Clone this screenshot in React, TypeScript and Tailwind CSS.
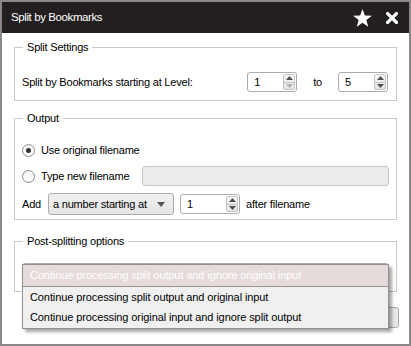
import React from "react";

const font = { fontFamily: '"Liberation Sans", Arial, sans-serif' };

function Spin({ value, w, downDisabled }: { value: string; w: string; downDisabled?: boolean }) {
  return (
    <div className={`relative flex h-[20px] ${w} items-center rounded-[3px] border border-[#acacac] bg-white`}>
      <span className="pl-[6px] text-[11px] leading-none text-black">{value}</span>
      <div className="absolute right-[1px] top-[1px] flex h-[16px] w-[12px] flex-col rounded-[2px] border border-[#c4c4c4] bg-gradient-to-b from-[#f6f6f6] to-[#e4e4e4]">
        <div className="flex flex-1 items-center justify-center border-b border-[#c4c4c4]">
          <svg width="7" height="4" viewBox="0 0 7 4"><path d="M0 4 L3.5 0 L7 4 Z" fill="#4d4d4d" /></svg>
        </div>
        <div className="flex flex-1 items-center justify-center">
          <svg width="7" height="4" viewBox="0 0 7 4"><path d="M0 0 L3.5 4 L7 0 Z" fill={downDisabled ? "#b4b4b4" : "#4d4d4d"} /></svg>
        </div>
      </div>
    </div>
  );
}

function Radio({ checked }: { checked?: boolean }) {
  return (
    <div className="flex h-[13px] w-[13px] items-center justify-center rounded-full border border-[#8c8c8c] bg-gradient-to-b from-[#f4f4f4] to-white">
      {checked && <div className="h-[5px] w-[5px] rounded-full bg-[#333333]" />}
    </div>
  );
}

export default function App() {
  return (
    <div className="h-[346px] w-[411px] overflow-hidden bg-[#8c8686] p-[2px] text-[11px] tracking-[-0.2px] text-black" style={font}>
      <div className="relative flex h-full w-full flex-col bg-white">
        {/* Title bar */}
        <div className="flex h-[31px] shrink-0 items-center bg-[#231f20] pl-[9px] pr-[11px]">
          <span className="flex-1 text-[11.5px] tracking-[-0.4px] text-white">Split by Bookmarks</span>
          <svg width="19" height="18" viewBox="0 0 24 23" className="mr-[14px]">
            <path d="M12 0 L15 8.2 L24 8.6 L16.9 14 L19.4 22.6 L12 17.6 L4.6 22.6 L7.1 14 L0 8.6 L9 8.2 Z" fill="#ffffff" />
          </svg>
          <svg width="12" height="12" viewBox="0 0 12 12">
            <path d="M1.5 1.5 L10.5 10.5 M10.5 1.5 L1.5 10.5" stroke="#ffffff" strokeWidth="3.2" strokeLinecap="square" />
          </svg>
        </div>

        <div className="flex flex-col px-[12px] pt-[8px]">
          {/* Split Settings */}
          <fieldset className="border border-[#c9c9c9] pb-[8px] pl-[7px] pr-[8px]">
            <legend className="ml-[1px] px-[4px] leading-[13px]">Split Settings</legend>
            <div className="mt-[18px] flex items-center">
              <span className="flex-1">Split by Bookmarks starting at Level:</span>
              <Spin value="1" w="w-[50px]" downDisabled />
              <span className="mx-[16px]">to</span>
              <Spin value="5" w="w-[50px]" />
            </div>
          </fieldset>

          {/* Output */}
          <fieldset className="mt-[11px] border border-[#c9c9c9] pb-[4px] pl-[7px] pr-[7px]">
            <legend className="ml-[1px] px-[4px] leading-[13px]">Output</legend>
            <div className="mt-[15px] flex h-[20px] items-center">
              <Radio checked />
              <span className="ml-[6px]">Use original filename</span>
            </div>
            <div className="mt-[6px] flex h-[20px] items-center">
              <Radio />
              <span className="ml-[6px] w-[101px]">Type new filename</span>
              <div className="h-[20px] flex-1 rounded-[3px] border border-[#c8c8c8] bg-[#ececec]" />
            </div>
            <div className="mt-[7px] flex h-[22px] items-center">
              <span className="w-[26px]">Add</span>
              <div className="flex h-[22px] w-[126px] items-center justify-between rounded-[3px] border border-[#acacac] bg-gradient-to-b from-[#f0f0f0] to-[#e5e5e5] pl-[4px] pr-[8px]">
                <span>a number starting at</span>
                <svg width="8" height="5" viewBox="0 0 8 5"><path d="M0 0 L4 5 L8 0 Z" fill="#555555" /></svg>
              </div>
              <div className="ml-[6px]">
                <Spin value="1" w="w-[60px]" />
              </div>
              <span className="ml-[6px]">after filename</span>
            </div>
          </fieldset>

          {/* Post-splitting options */}
          <fieldset className="mt-[15px] border border-[#c9c9c9] pb-[6px] pl-[7px] pr-[7px]">
            <legend className="ml-[1px] px-[4px] leading-[13px]">Post-splitting options</legend>
            <div className="mt-[15px] h-[22px] rounded-[3px] border border-[#acacac] bg-[#ececec]" />
          </fieldset>

          {/* Buttons (hidden under the popup) */}
          <div className="-mr-[2px] mt-[15px] flex justify-end gap-[7px]">
            <div className="h-[21px] w-[80px] rounded-[3px] border border-[#555555] bg-[#e8e8e8]" />
            <div className="h-[21px] w-[80px] rounded-[3px] border border-[#acacac] bg-[#e8e8e8]" />
          </div>
        </div>

        {/* Dropdown popup */}
        <div className="absolute left-[20px] top-[262px] w-[367px] border border-[#948f8f] bg-[#f0f0f0] tracking-[-0.1px] shadow-[3px_3px_3px_rgba(0,0,0,0.35)]">
          <div className="flex h-[21px] items-center bg-[#e5dbdb] pl-[7px] text-white">Continue processing split output and ignore original input</div>
          <div className="flex h-[21px] items-center border-t border-[#9a9696] pl-[7px]">Continue processing split output and original input</div>
          <div className="flex h-[21px] items-center pl-[7px]">Continue processing original input and ignore split output</div>
        </div>
      </div>
    </div>
  );
}
